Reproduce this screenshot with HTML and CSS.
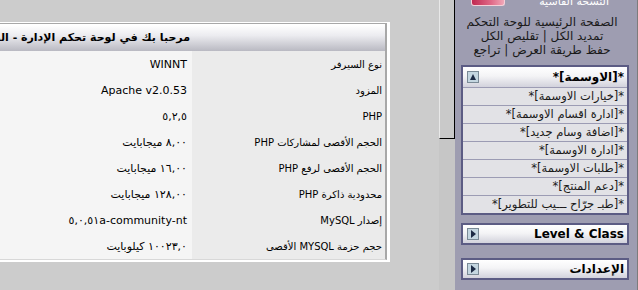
FILE: index.html
```html
<!DOCTYPE html>
<html lang="ar" dir="rtl">
<head>
    <meta charset="utf-8">
    <title>لوحة تحكم الإدارة</title>
    <link rel="stylesheet" href="styles.css">
</head>
<body>
    <div class="frames">
        <!-- right frame: navigation -->
        <div class="nav-frame">
            <div class="nav">
                <div class="logo">
                    <span class="logo-img"></span>
                    <span class="logo-text">النسخة القاسية</span>
                </div>
                <div class="links">
                    <a href="#">الصفحة الرئيسية للوحة التحكم</a><br>
                    <a href="#">تمديد الكل</a> | <a href="#">تقليص الكل</a><br>
                    <a href="#">حفظ طريقة العرض</a> | <a href="#">تراجع</a>
                </div>

                <div class="group">
                    <div class="group-head">
                        <span class="group-title">*[الاوسمة]*</span>
                        <span class="toggle up"></span>
                    </div>
                    <a class="group-item" href="#">*[خيارات الاوسمة]*</a>
                    <a class="group-item" href="#">*[ادارة اقسام الاوسمة]*</a>
                    <a class="group-item" href="#">*[اضافة وسام جديد]*</a>
                    <a class="group-item" href="#">*[ادارة الاوسمة]*</a>
                    <a class="group-item" href="#">*[طلبات الاوسمة]*</a>
                    <a class="group-item" href="#">*[دعم المنتج]*</a>
                    <a class="group-item" href="#">*[طبـ جرّاح ـــيب للتطوير]*</a>
                </div>

                <div class="group closed">
                    <div class="group-head">
                        <span class="group-title">Level &amp; Class</span>
                        <span class="toggle down"></span>
                    </div>
                </div>

                <div class="group closed last">
                    <div class="group-head">
                        <span class="group-title">الإعدادات</span>
                        <span class="toggle down"></span>
                    </div>
                </div>
            </div>
            <div class="scroll"><div class="thumb"></div></div>
        </div>

        <!-- left frame: content -->
        <div class="main-frame">
            <div class="panel">
                <div class="panel-in">
                    <div class="panel-head">مرحبا بك في لوحة تحكم الإدارة - النسخة القاسية</div>
                    <table class="info">
                        <tr><td class="label">نوع السيرفر</td><td class="value">WINNT</td></tr>
                        <tr><td class="label">المزود</td><td class="value">Apache v2.0.53</td></tr>
                        <tr><td class="label">PHP</td><td class="value">٥,٢,٥</td></tr>
                        <tr><td class="label">الحجم الأقصى لمشاركات PHP</td><td class="value">٨,٠٠ ميجابايت</td></tr>
                        <tr><td class="label">الحجم الأقصى لرفع PHP</td><td class="value">١٦,٠٠ ميجابايت</td></tr>
                        <tr><td class="label">محدودية ذاكرة PHP</td><td class="value">١٢٨,٠٠ ميجابايت</td></tr>
                        <tr><td class="label">إصدار MySQL</td><td class="value"><span dir="ltr">٥,٠,٥١a-community-nt</span></td></tr>
                        <tr><td class="label">حجم حزمة MYSQL الأقصى</td><td class="value">١٠٠٢٣,٠ كيلوبايت</td></tr>
                    </table>
                </div>
            </div>
        </div>
    </div>
</body>
</html>
```

FILE: styles.css
```css
html, body {
    margin: 0;
    height: 100%;
}

body {
    font-family: "DejaVu Sans", sans-serif;
    font-size: 11px;
    color: #000;
    background-color: #cccccc;
    overflow: hidden;
}

a {
    color: #1a1a1a;
    text-decoration: none;
}

.frames {
    display: flex;
    height: 290px;
}

/* content frame */
.main-frame {
    flex: 0 0 439px;
    overflow: hidden;
    padding-top: 22px;
    box-sizing: border-box;
}

.panel {
    width: 700px;
    margin-right: 49px;
    border-top: 1px solid #fff;
    border-right: 3px solid #fff;
    border-bottom: 2px solid #fff;
}

.panel-in {
    border-top: 1px solid #a8a8a8;
    border-right: 2px solid #a8a8a8;
    border-bottom: 1px solid #d8d8d8;
}

.panel-head {
    height: 26px;
    line-height: 26px;
    border-top: 1px solid #fff;
    padding-right: 195px;
    text-align: right;
    font-weight: bold;
    font-size: 11px;
    background: linear-gradient(#ffffff, #ececf0 40%, #b9b9c2);
}

.info {
    width: 100%;
    border-collapse: collapse;
}

.info td {
    height: 26px;
    padding: 0;
    white-space: nowrap;
}

.info .label {
    width: 190px;
    padding-right: 3px;
    background-color: #ebebeb;
    font-size: 10px;
}

.info .value {
    padding-right: 5px;
    background-color: #f5f5f5;
    font-size: 11px;
}

/* navigation frame */
.nav-frame {
    flex: 1;
    display: flex;
    border-right: 1px solid #7c7c7c;
}

.nav {
    width: 182px;
    background-color: #9e9db1;
    padding: 0 8px 0 6px;
    box-sizing: border-box;
}

.scroll {
    width: 16px;
    background-color: #c6c6c6;
}

.thumb {
    height: 139px;
    box-sizing: border-box;
    border-left: 1px solid #e8e8e8;
    border-right: 1px solid #000;
    border-bottom: 1px solid #000;
    background-color: #c9c9c9;
}

.logo {
    height: 8px;
    overflow: hidden;
}

.logo-img {
    float: left;
    width: 32px;
    height: 5px;
    margin-left: 10px;
    border: 1px solid #f4d0d8;
    border-top: 0;
    border-radius: 0 0 3px 3px;
    background: linear-gradient(90deg, #c02850, #e06a88 60%, #f0a8b8);
}

.logo-text {
    display: block;
    padding-right: 20px;
    color: #fff;
    font-size: 11px;
    line-height: 3px;
}

.links {
    text-align: center;
    font-size: 12px;
    line-height: 14px;
    padding: 7px 6px 0 0;
    color: #222;
}

.group {
    margin-top: 8px;
    border: 2px solid #5c5c84;
}

.group.last {
    margin-top: 13px;
}

.group-head {
    display: flex;
    justify-content: space-between;
    align-items: center;
    height: 20px;
    padding: 0 3px 0 4px;
    background: linear-gradient(#ffffff, #f4f4f6 45%, #d2d2dc);
}

.group.closed .group-head {
    height: 18px;
}

.group-title {
    font-weight: bold;
    font-size: 12px;
}

.toggle {
    position: relative;
    width: 10px;
    height: 10px;
    border: 1px solid #7a8a96;
    background-color: #c4d6e0;
}

.toggle::after {
    content: "";
    position: absolute;
    left: 2px;
    top: 2px;
    border-style: solid;
    border-color: transparent;
}

.toggle.up::after {
    border-width: 0 3px 6px 3px;
    border-bottom-color: #1c2a44;
}

.toggle.down::after {
    left: 3px;
    top: 1px;
    border-width: 4px 0 4px 5px;
    border-left-color: #1c2a44;
}

.group-item {
    display: block;
    height: 17px;
    line-height: 17px;
    border-top: 1px solid #9c9cb4;
    padding-right: 3px;
    background-color: #e2e2e6;
    font-size: 11.5px;
}
```
